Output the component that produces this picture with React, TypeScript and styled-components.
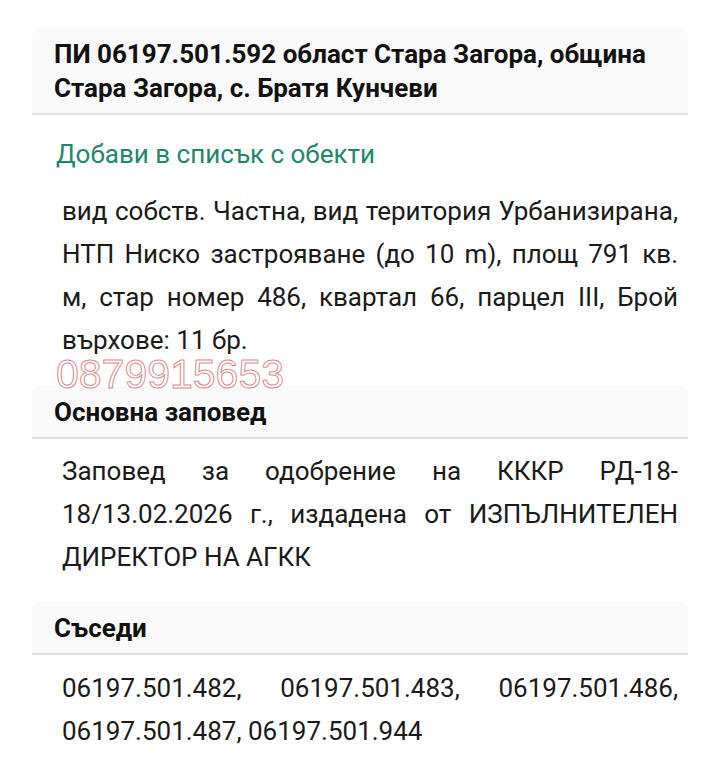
import React from "react";
import styled, { createGlobalStyle } from "styled-components";

const GlobalStyle = createGlobalStyle`
  html, body {
    margin: 0;
    padding: 0;
    background: #ffffff;
    font-family: Roboto, "Noto Sans", sans-serif;
    color: #1a1a1a;
  }
`;

const neighbours = [
  "06197.501.482",
  "06197.501.483",
  "06197.501.486",
  "06197.501.487",
  "06197.501.944",
];

export default function App() {
  return (
    <>
      <GlobalStyle />
      <Page>
        <Section>
          <SectionHead>
            ПИ 06197.501.592 област Стара Загора, община Стара Загора, с. Братя
            Кунчеви
          </SectionHead>
          <AddLink>Добави в списък с обекти</AddLink>
          <Body $top={19}>
            вид собств. Частна, вид територия Урбанизирана, НТП Ниско
            застрояване (до 10 m), площ 791 кв. м, стар номер 486, квартал 66,
            парцел III, Брой върхове: 11 бр.
          </Body>
          <Watermark>
            <span>0879915653</span>
          </Watermark>
        </Section>

        <Section>
          <SectionHead>Основна заповед</SectionHead>
          <Body $top={11}>
            Заповед за одобрение на КККР РД-18-
            <wbr />
            18/13.02.2026 г., издадена от ИЗПЪЛНИТЕЛЕН ДИРЕКТОР НА АГКК
          </Body>
        </Section>

        <Section $gap={23}>
          <SectionHead>Съседи</SectionHead>
          <Body $top={12}>{neighbours.join(", ")}</Body>
        </Section>
      </Page>
    </>
  );
}

const Page = styled.div`
  display: flex;
  flex-direction: column;
  padding: 28px 32px 20px;
`;

const Section = styled.section<{ $gap?: number }>`
  display: flex;
  flex-direction: column;
  margin-top: ${(p) => p.$gap ?? 0}px;
`;

const SectionHead = styled.h2`
  margin: 0;
  padding: 9px 30px 8px 22px;
  background: #fafafa;
  border-bottom: 2px solid #e0e0e0;
  border-radius: 8px 8px 0 0;
  font-size: 26px;
  line-height: 34px;
  font-weight: 700;
  color: #111111;
`;

const AddLink = styled.a`
  display: block;
  margin: 22px 0 0 24px;
  font-size: 26px;
  line-height: 34px;
  color: #22876a;
  cursor: pointer;
`;

const Body = styled.p<{ $top: number }>`
  margin: ${(p) => p.$top}px 0 0;
  padding: 0 10px 0 30px;
  font-size: 26px;
  line-height: 43px;
  text-align: justify;
  color: #1a1a1a;
`;

const Watermark = styled.div`
  height: 24px;
  padding-left: 24px;
  overflow: visible;
  position: relative;
  z-index: 1;

  span {
    display: block;
    font-family: "Liberation Sans", Arial, sans-serif;
    font-size: 41px;
    line-height: 24px;
    color: transparent;
    -webkit-text-stroke: 1px #d98b8d;
    white-space: nowrap;
  }
`;
